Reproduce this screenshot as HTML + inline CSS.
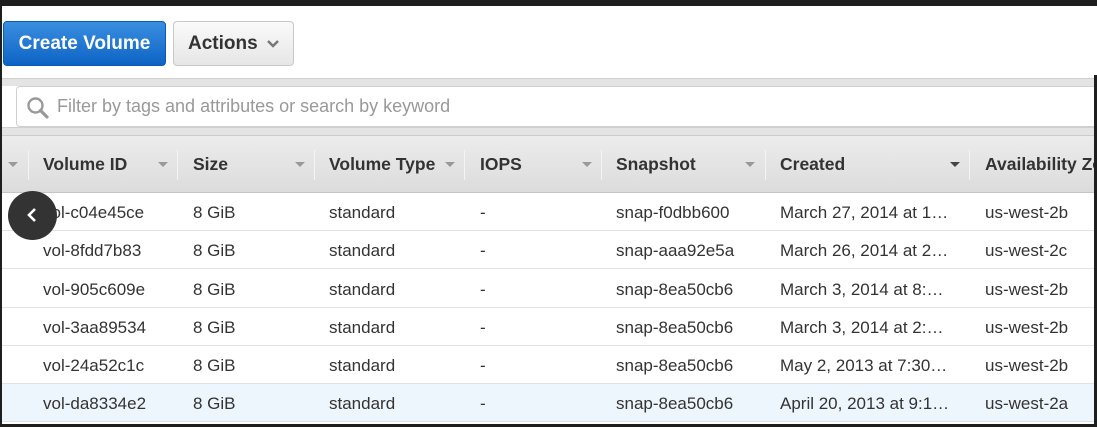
<!DOCTYPE html>
<html><head><style>
*{margin:0;padding:0;box-sizing:border-box}
body{width:1097px;height:427px;background:#1e1e1e;position:relative;overflow:hidden;font-family:"Liberation Sans",Arial,sans-serif}
.page{position:absolute;left:2px;top:6px;width:1095px;height:418px;background:#fff;overflow:hidden}
.btn{position:absolute;top:15px;height:45px;border-radius:4px;font-weight:bold;font-size:19px;line-height:43px;white-space:nowrap}
.b1{left:1px;width:163px;background:linear-gradient(#3a8fe0,#0d63c4);border:1px solid #0a5bb5;color:#fff;text-align:center}
.b2{left:171px;width:121px;background:linear-gradient(#fafafa,#e6e6e6);border:1px solid #c8c8c8;color:#333;padding-left:14px}
.band{position:absolute;left:0;width:1095px;background:#e4e4e4;border-top:1px solid #cfcfcf}
.filter{position:absolute;left:14px;top:80px;width:1090px;height:41px;border:1px solid #d0d0d0;border-radius:4px;background:#fff;color:#999;font-size:18px;line-height:39px;padding-left:40px;white-space:nowrap}
.hdr{position:absolute;left:0;top:129px;width:1095px;height:58px;background:linear-gradient(#ececec,#dcdcdc);border-top:1px solid #ccc;border-bottom:1px solid #c4c4c4;overflow:hidden}
.hdr span{position:absolute;top:18px;font-weight:bold;font-size:17.5px;color:#333;white-space:nowrap}
.arr{position:absolute;top:26px;width:0;height:0;border-left:5px solid transparent;border-right:5px solid transparent;border-top:5px solid #999}
.sep{position:absolute;top:14px;width:1px;height:30px;background:#c8c8c8;border-right:1px solid #f4f4f4}
.rows{position:absolute;left:2px;top:193px;width:1092px;height:231px;overflow:hidden}
.row{position:absolute;left:0;width:1092px;height:38px;border-bottom:1px solid #e2e2e2;font-size:17px;color:#333}
.row span{position:absolute;top:10px;white-space:nowrap}
</style></head><body>
<div class="page">
<div class="btn b1">Create Volume</div>
<div class="btn b2">Actions <svg width="14" height="10" viewBox="0 0 14 10" style="margin-left:3px"><path d="M2 2L7 7L12 2" fill="none" stroke="#777" stroke-width="2.5"/></svg></div>
<div class="band" style="top:72px;height:8px"></div>
<div class="band" style="top:121px;height:8px"></div>
<div class="filter">Filter by tags and attributes or search by keyword
<svg style="position:absolute;left:9px;top:9px" width="24" height="24" viewBox="0 0 24 24"><circle cx="9.5" cy="9.5" r="7" fill="none" stroke="#999" stroke-width="2.4"/><path d="M14.5 14.5L21 21" stroke="#999" stroke-width="3.2" stroke-linecap="round"/></svg></div>
<div class="hdr">
<div class="arr" style="left:6px"></div><div class="sep" style="left:26px"></div>
<span style="left:41px">Volume ID</span><div class="arr" style="left:156px"></div><div class="sep" style="left:175px"></div>
<span style="left:191px">Size</span><div class="arr" style="left:293px"></div><div class="sep" style="left:312px"></div>
<span style="left:327px">Volume Type</span><div class="arr" style="left:443px"></div><div class="sep" style="left:462px"></div>
<span style="left:478px">IOPS</span><div class="arr" style="left:580px"></div><div class="sep" style="left:599px"></div>
<span style="left:614px">Snapshot</span><div class="arr" style="left:743px"></div><div class="sep" style="left:763px"></div>
<span style="left:778px">Created</span><div class="arr" style="left:948px;border-top-color:#444"></div><div class="sep" style="left:967px"></div>
<span style="left:983px">Availability Zone</span>
</div>
</div>
<div class="rows">
<div class="row" style="top:0"><span style="left:41px">vol-c04e45ce</span><span style="left:191px">8 GiB</span><span style="left:327px">standard</span><span style="left:478px">-</span><span style="left:614px">snap-f0dbb600</span><span style="left:778px">March 27, 2014 at 1…</span><span style="left:983px">us-west-2b</span></div>
<div class="row" style="top:38px"><span style="left:41px">vol-8fdd7b83</span><span style="left:191px">8 GiB</span><span style="left:327px">standard</span><span style="left:478px">-</span><span style="left:614px">snap-aaa92e5a</span><span style="left:778px">March 26, 2014 at 2…</span><span style="left:983px">us-west-2c</span></div>
<div class="row" style="top:77px"><span style="left:41px">vol-905c609e</span><span style="left:191px">8 GiB</span><span style="left:327px">standard</span><span style="left:478px">-</span><span style="left:614px">snap-8ea50cb6</span><span style="left:778px">March 3, 2014 at 8:…</span><span style="left:983px">us-west-2b</span></div>
<div class="row" style="top:115px"><span style="left:41px">vol-3aa89534</span><span style="left:191px">8 GiB</span><span style="left:327px">standard</span><span style="left:478px">-</span><span style="left:614px">snap-8ea50cb6</span><span style="left:778px">March 3, 2014 at 2:…</span><span style="left:983px">us-west-2b</span></div>
<div class="row" style="top:153px"><span style="left:41px">vol-24a52c1c</span><span style="left:191px">8 GiB</span><span style="left:327px">standard</span><span style="left:478px">-</span><span style="left:614px">snap-8ea50cb6</span><span style="left:778px">May 2, 2013 at 7:30…</span><span style="left:983px">us-west-2b</span></div>
<div class="row" style="top:191px;background:#eef6fd"><span style="left:41px">vol-da8334e2</span><span style="left:191px">8 GiB</span><span style="left:327px">standard</span><span style="left:478px">-</span><span style="left:614px">snap-8ea50cb6</span><span style="left:778px">April 20, 2013 at 9:1…</span><span style="left:983px">us-west-2a</span></div>
</div>
<div style="position:absolute;left:1094px;top:75px;width:3px;height:352px;background:#1e1e1e"></div>
<div style="position:absolute;left:8px;top:191px;width:49px;height:49px;border-radius:50%;background:#333"></div>
<svg style="position:absolute;left:25px;top:206px" width="14" height="18" viewBox="0 0 14 18"><path d="M10 3L4 9L10 15" fill="none" stroke="#fff" stroke-width="2.6"/></svg>
</body></html>
